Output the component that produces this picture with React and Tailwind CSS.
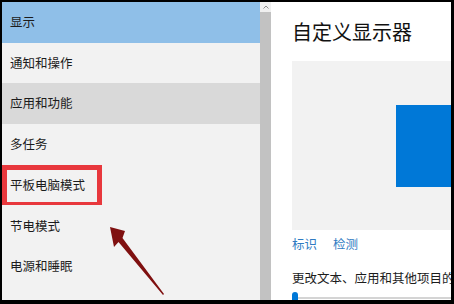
import React from 'react';

const items = [
  { label: '显示', bg: 'bg-[#8fbfe8]' },
  { label: '通知和操作', bg: 'bg-[#f2f2f2]' },
  { label: '应用和功能', bg: 'bg-[#d9d9d9]' },
  { label: '多任务', bg: 'bg-[#f2f2f2]' },
  { label: '平板电脑模式', bg: 'bg-[#f2f2f2]', marked: true },
  { label: '节电模式', bg: 'bg-[#f2f2f2]' },
  { label: '电源和睡眠', bg: 'bg-[#f2f2f2]' },
];

const App = () => {
  return (
    <div className="relative w-[454px] h-[304px] bg-black pt-[2px] pl-[2px] pr-[3px] pb-[4px] overflow-hidden font-['Noto_Sans_CJK_SC',sans-serif] text-[#1c1c1c]">
      <div className="flex h-full">
        {/* sidebar */}
        <div className="w-[258px] h-full bg-[#f2f2f2] flex flex-col overflow-hidden">
          {items.map(({ label, bg, marked }) => (
            <div key={label} className={`relative shrink-0 h-[40.7px] flex items-center pl-[8px] text-[12.5px] leading-none ${bg}`}>
              {label}
              {marked && (
                <div className="absolute left-0 top-0 w-[100px] h-[42px] border-[5px] border-[#e8383d]" />
              )}
            </div>
          ))}
        </div>

        {/* scrollbar */}
        <div className="w-[11px] h-full flex flex-col">
          <div className="h-[10px] bg-[#f0f0f0] flex items-center justify-center">
            <svg width="6" height="4" viewBox="0 0 6 4">
              <path d="M0.5 3.5 L3 1 L5.5 3.5" fill="none" stroke="#8a8a8a" strokeWidth="1" />
            </svg>
          </div>
          <div className="flex-1 bg-[#c2c2c2]" />
        </div>

        {/* content */}
        <div className="flex-1 h-full bg-white overflow-hidden pl-[21px] flex flex-col">
          <h1 className="mt-[20px] text-[20px] leading-[20px] font-normal whitespace-nowrap text-[#111]">自定义显示器</h1>
          <div className="mt-[19px] w-[220px] h-[169px] shrink-0 bg-[#f2f2f2] pt-[44px] pl-[104px]">
            <div className="w-[120px] h-[82px] bg-[#0078d7]" />
          </div>
          <div className="mt-[6px] flex gap-[16px] text-[12.5px] leading-[16px] text-[#2f7bc2]">
            <span>标识</span>
            <span>检测</span>
          </div>
          <p className="mt-[18px] text-[12.5px] leading-[16px] whitespace-nowrap">更改文本、应用和其他项目的大小</p>
          <div className="mt-[6px] flex items-start">
            <div className="w-[6px] h-[16px] rounded-full bg-[#0078d7] shrink-0" />
            <div className="mt-[5px] h-[2px] flex-1 bg-[#d4d4d4]" />
          </div>
        </div>
      </div>

      {/* annotation arrow */}
      <svg className="absolute left-0 top-0 pointer-events-none" width="454" height="304" viewBox="0 0 454 304">
        <polygon
          points="110,227 125,231 122.5,238 164,294 163,295 118.5,242 114,247"
          fill="#7f1010"
        />
      </svg>
    </div>
  );
};

export default App;
